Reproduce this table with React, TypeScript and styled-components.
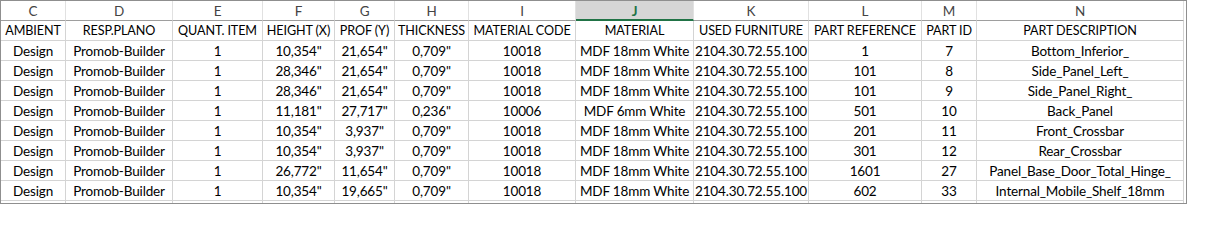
import styled, { createGlobalStyle } from "styled-components"

const GlobalStyle = createGlobalStyle`
    html, body {
        margin: 0;
        padding: 0;
        background: #ffffff;
    }
`

type Column = { letter: string; title: string; width: number }

const columns: Column[] = [
    { letter: "C", title: "AMBIENT", width: 65 },
    { letter: "D", title: "RESP.PLANO", width: 107 },
    { letter: "E", title: "QUANT. ITEM", width: 90 },
    { letter: "F", title: "HEIGHT (X)", width: 72 },
    { letter: "G", title: "PROF (Y)", width: 60 },
    { letter: "H", title: "THICKNESS", width: 74 },
    { letter: "I", title: "MATERIAL CODE", width: 107 },
    { letter: "J", title: "MATERIAL", width: 118 },
    { letter: "K", title: "USED FURNITURE", width: 115 },
    { letter: "L", title: "PART REFERENCE", width: 113 },
    { letter: "M", title: "PART ID", width: 55 },
    { letter: "N", title: "PART DESCRIPTION", width: 207 }
]

const selectedLetter = "J"

const rows: string[][] = [
    ["Design", "Promob-Builder", "1", '10,354"', '21,654"', '0,709"', "10018", "MDF 18mm White", "2104.30.72.55.100", "1", "7", "Bottom_Inferior_"],
    ["Design", "Promob-Builder", "1", '28,346"', '21,654"', '0,709"', "10018", "MDF 18mm White", "2104.30.72.55.100", "101", "8", "Side_Panel_Left_"],
    ["Design", "Promob-Builder", "1", '28,346"', '21,654"', '0,709"', "10018", "MDF 18mm White", "2104.30.72.55.100", "101", "9", "Side_Panel_Right_"],
    ["Design", "Promob-Builder", "1", '11,181"', '27,717"', '0,236"', "10006", "MDF 6mm White", "2104.30.72.55.100", "501", "10", "Back_Panel"],
    ["Design", "Promob-Builder", "1", '10,354"', '3,937"', '0,709"', "10018", "MDF 18mm White", "2104.30.72.55.100", "201", "11", "Front_Crossbar"],
    ["Design", "Promob-Builder", "1", '10,354"', '3,937"', '0,709"', "10018", "MDF 18mm White", "2104.30.72.55.100", "301", "12", "Rear_Crossbar"],
    ["Design", "Promob-Builder", "1", '26,772"', '11,654"', '0,709"', "10018", "MDF 18mm White", "2104.30.72.55.100", "1601", "27", "Panel_Base_Door_Total_Hinge_"],
    ["Design", "Promob-Builder", "1", '10,354"', '19,665"', '0,709"', "10018", "MDF 18mm White", "2104.30.72.55.100", "602", "33", "Internal_Mobile_Shelf_18mm"]
]

const App = () => {
    return (
        <>
            <GlobalStyle />
            <Sheet>
                <Grid $template={columns.map((c) => `${c.width}px`).join(" ")}>
                    {columns.map((c) => (
                        <ColumnHeader key={c.letter} $selected={c.letter === selectedLetter}>
                            {c.letter}
                        </ColumnHeader>
                    ))}
                    {columns.map((c) => (
                        <TitleCell key={`title-${c.letter}`}>{c.title}</TitleCell>
                    ))}
                    {rows.map((row, r) =>
                        row.map((value, i) => <Cell key={`r${r}-${i}`}>{value}</Cell>)
                    )}
                    {columns.map((c) => (
                        <StubCell key={`stub-${c.letter}`} />
                    ))}
                </Grid>
            </Sheet>
        </>
    )
}

const Sheet = styled.div`
    width: 1187px;
    height: 204px;
    box-sizing: border-box;
    border: 1px solid #8f8f8f;
    overflow: hidden;
    background: #ffffff;
`

const Grid = styled.div<{ $template: string }>`
    display: grid;
    grid-template-columns: ${({ $template }) => $template};
    grid-auto-rows: 20px;
    font-family: Lato, "Open Sans", sans-serif;
    font-size: 13.5px;
    letter-spacing: -0.15px;
    color: #000000;
`

const Cell = styled.div`
    box-sizing: border-box;
    border-right: 1px solid #d4d4d4;
    border-bottom: 1px solid #d4d4d4;
    display: flex;
    align-items: center;
    justify-content: center;
    padding-top: 1px;
    white-space: nowrap;
    overflow: hidden;
    line-height: 18px;
`

const TitleCell = styled(Cell)`
    font-size: 12.6px;
    letter-spacing: -0.1px;
`

const ColumnHeader = styled(Cell)<{ $selected?: boolean }>`
    color: ${({ $selected }) => ($selected ? "#217346" : "#444444")};
    font-weight: ${({ $selected }) => ($selected ? 700 : 400)};
    background: ${({ $selected }) => ($selected ? "#d6d6d6" : "#ffffff")};
    border-right-color: #e1e1e1;
    border-bottom: ${({ $selected }) => ($selected ? "2px solid #217346" : "1px solid #9e9e9e")};
    padding-top: ${({ $selected }) => ($selected ? "2px" : "1px")};
`

const StubCell = styled.div`
    box-sizing: border-box;
    border-right: 1px solid #d4d4d4;
`

export default App
